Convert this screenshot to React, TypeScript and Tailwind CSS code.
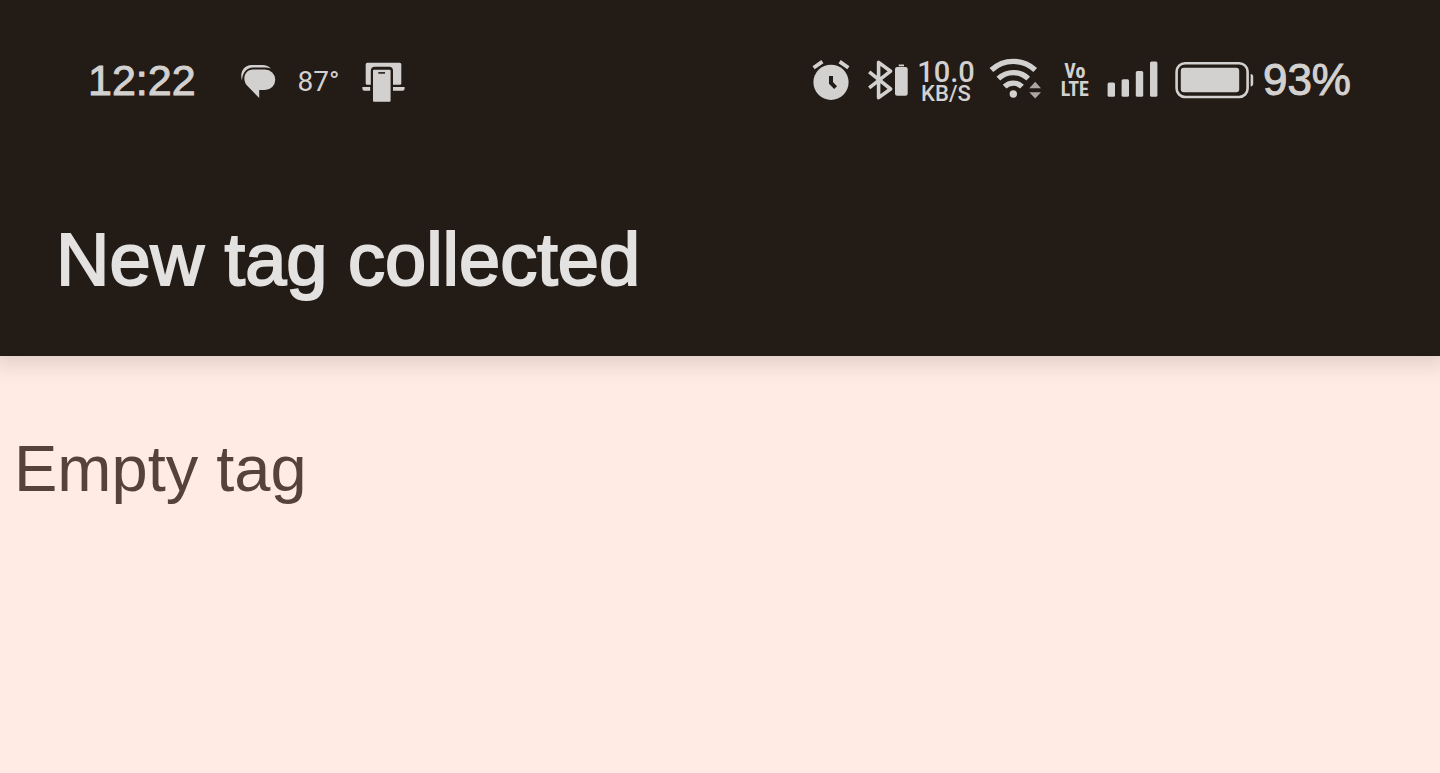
function ChatIcon() {
  return (
    <svg width="36" height="36" viewBox="0 0 36 36" fill="currentColor" aria-hidden="true">
      <path d="M13 5.5H25A10.2 10.2 0 0 1 25 26H19.2V34L7 21.6C1.5 15 5 5.5 13 5.5Z" />
      <path d="M2 16.5C-.5 9 3.5 1 11.5 1H22C26 1 29.5 2.5 31 4.6C29 3.9 27 3.6 25 3.6H13C7 3.6 2.5 8.5 2 16.5Z" />
    </svg>
  );
}

function DevicesIcon() {
  return (
    <svg width="44" height="42" viewBox="0 0 44 42" fill="currentColor" aria-hidden="true">
      <rect x="3.7" y="1.7" width="35.6" height="22" rx="1.5" />
      <path d="M.4 26H8.2V29.8H2.4Q.4 29.8 .4 27.8ZM31 26H42.6V27.8Q42.6 29.8 40.6 29.8H31Z" />
      <path d="M8.8 42V10Q8.8 5.8 13 5.8H27Q31 5.8 31 10V42Z" fill="#231b16" />
      <rect x="11" y="8.8" width="17.6" height="32" rx="1" />
      <path d="M16.3 11.9H23" stroke="#231b16" strokeWidth="1.6" />
    </svg>
  );
}

function AlarmIcon() {
  return (
    <svg width="40" height="44" viewBox="0 0 40 44" fill="none" stroke="currentColor" aria-hidden="true">
      <circle cx="20" cy="24.3" r="17.6" fill="currentColor" stroke="none" />
      <path d="M2.6 9.8L11.4 3.6M28.6 3.6L37.4 9.8" strokeWidth="3.8" />
      <path d="M20 18V25L24.6 29.6" stroke="#231b16" strokeWidth="4" />
    </svg>
  );
}

function BluetoothIcon() {
  return (
    <svg width="42" height="42" viewBox="0 0 42 42" fill="none" stroke="currentColor" aria-hidden="true">
      <path d="M2.2 12.8L23.6 30L11.6 38.6V3.4L23.6 12.2L2.2 28.8" strokeWidth="3.6" strokeLinejoin="round" />
      <rect x="28" y="8" width="12.7" height="28.7" rx="2.2" fill="currentColor" stroke="none" />
      <path d="M31.7 6.4H37" strokeWidth="1.8" />
    </svg>
  );
}

function WifiIcon() {
  return (
    <svg width="54" height="44" viewBox="0 0 54 44" fill="none" stroke="currentColor" strokeWidth="5.4" aria-hidden="true">
      <path d="M2.4 12A32 32 0 0 1 46.2 12" />
      <path d="M9.4 20.6A21.5 21.5 0 0 1 39.2 20.6" />
      <path d="M15.6 28.6A12.5 12.5 0 0 1 33 28.6" />
      <circle cx="24.3" cy="36" r="3.7" fill="currentColor" stroke="none" />
      <path d="M46.2 23.8L52 30.3H40.3ZM40.3 34.2H52L46.2 40.5Z" fill="#aaa6a3" stroke="none" />
    </svg>
  );
}

function SignalIcon() {
  return (
    <svg width="52" height="38" viewBox="0 0 52 38" fill="currentColor" aria-hidden="true">
      <rect x=".6" y="21.4" width="7.4" height="14.4" rx="1.5" />
      <rect x="14.6" y="18.2" width="7.4" height="17.6" rx="1.5" />
      <rect x="28.8" y="10" width="7.4" height="25.8" rx="1.5" />
      <rect x="43" y=".4" width="7.4" height="35.4" rx="1.5" />
    </svg>
  );
}

function BatteryIcon() {
  return (
    <svg width="80" height="38" viewBox="0 0 80 38" fill="currentColor" aria-hidden="true">
      <rect x="1.6" y="2.2" width="71" height="33.8" rx="8.5" fill="none" stroke="currentColor" strokeWidth="2.6" />
      <rect x="5.8" y="6.8" width="58.4" height="24.4" rx="3" />
      <path d="M75.6 13Q78.2 13 78.2 15.6V22.6Q78.2 25.4 75.6 25.4Z" />
    </svg>
  );
}

function StatusBar() {
  return (
    <div className="flex h-[60px] items-center justify-between pl-[88px] pr-[89px] text-[#d3d1cf]">
      <div className="flex items-center">
        <time className="text-[43px] leading-[60px] [-webkit-text-stroke:1px_currentColor]">12:22</time>
        <div className="ml-11 flex items-center gap-[22px] pt-1">
          <ChatIcon />
          <span className="font-['Roboto',sans-serif] text-[28px] leading-[56px]">87°</span>
          <DevicesIcon />
        </div>
      </div>

      <div className="flex items-center">
        <AlarmIcon />
        <span className="ml-4">
          <BluetoothIcon />
        </span>
        <p className="ml-2 flex flex-col items-center pt-1 font-['Roboto',sans-serif] font-medium">
          <span className="text-[29px] leading-6">10.0</span>
          <span className="text-[22px] leading-5">KB/S</span>
        </p>
        <span className="ml-3.5">
          <WifiIcon />
        </span>
        <p className="ml-[18px] flex flex-col items-center font-['Roboto_Condensed','Open_Sans_Condensed','Noto_Sans_Condensed',sans-serif] text-[20px] font-bold leading-[18px]">
          <span>Vo</span>
          <span>LTE</span>
        </p>
        <span className="ml-[18px]">
          <SignalIcon />
        </span>
        <span className="ml-4">
          <BatteryIcon />
        </span>
        <span className="ml-2 text-[44px] leading-[60px] [-webkit-text-stroke:1px_currentColor]">93%</span>
      </div>
    </div>
  );
}

export default function App() {
  return (
    <div className="min-h-screen bg-[#ffebe4] font-['Liberation_Sans',sans-serif]">
      <header className="bg-[#231b16] pb-12 pt-[50px] shadow-[0_2px_20px_6px_rgba(35,27,22,0.14)]">
        <StatusBar />
        <h1 className="mt-[102px] px-14 text-[74px] font-normal leading-24 text-[#e3e2e1] [-webkit-text-stroke:2px_currentColor]">
          New tag collected
        </h1>
      </header>

      <main className="px-3.5 pt-[65px]">
        <p className="text-[65px] leading-24 text-[#55433b]">Empty tag</p>
      </main>
    </div>
  );
}
